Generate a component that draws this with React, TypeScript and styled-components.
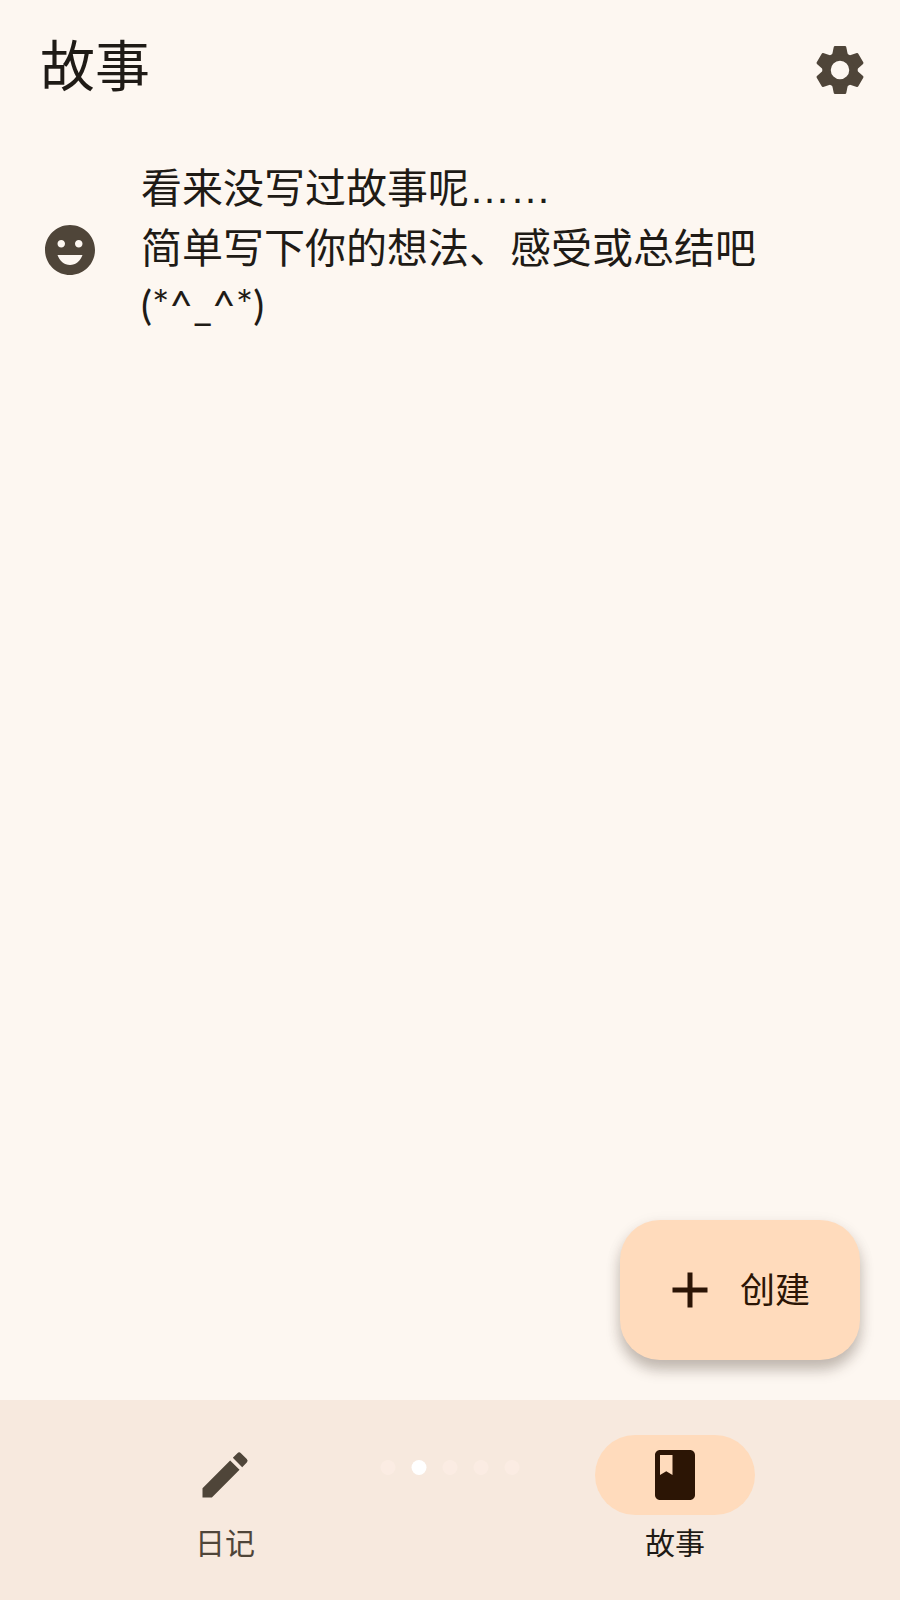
import React, { useState } from "react";
import styled, { createGlobalStyle } from "styled-components";
import { MdAdd, MdBook, MdEdit, MdEmojiEmotions } from "react-icons/md";

const color = {
  surface: "#fdf7f1",
  bar: "#f7e9de",
  accent: "#ffdbbc",
  text: "#1f1b16",
  muted: "#4f4539",
  onAccent: "#2c1505",
};

const GlobalStyle = createGlobalStyle`
  *, *::before, *::after { box-sizing: border-box; }
  body {
    margin: 0;
    background: ${color.surface};
    color: ${color.text};
    font-family: "Noto Sans CJK SC", sans-serif;
  }
  button {
    border: 0;
    padding: 0;
    background: none;
    font-family: inherit;
    cursor: pointer;
  }
  svg { display: block; }
`;

const Screen = styled.div`
  display: flex;
  flex-direction: column;
  min-height: 100vh;
`;

const TopBar = styled.header`
  display: flex;
  align-items: center;
  justify-content: space-between;
  height: 140px;
  padding: 0 30px 0 40px;
`;

const Title = styled.h1`
  margin: 0;
  padding-bottom: 16px;
  font-size: 55px;
  font-weight: 400;
  line-height: 70px;
`;

const IconButton = styled.button`
  color: ${color.muted};
`;

const Content = styled.main`
  flex: 1;
  display: flex;
  flex-direction: column;
  padding: 15px 40px 40px;
`;

const EmptyNotice = styled.section`
  display: flex;
  align-items: center;
  gap: 41px;
  svg { flex: none; color: ${color.muted}; }
`;

const NoticeText = styled.p`
  margin: 0;
  padding-bottom: 10px;
  font-size: 41px;
  line-height: 60px;
`;

const Line = styled.span`
  display: block;
  height: 60px;
`;

const Dots = styled.span`
  font-family: "Liberation Sans", sans-serif;
`;

const Kaomoji = styled(Line)`
  font-family: Lato, sans-serif;
`;

const CreateButton = styled.button`
  display: flex;
  align-items: center;
  gap: 20px;
  height: 140px;
  margin-top: auto;
  align-self: flex-end;
  padding: 0 50px 0 40px;
  border-radius: 40px;
  background: ${color.accent};
  color: ${color.onAccent};
  font-size: 35px;
  font-weight: 400;
  line-height: 50px;
  box-shadow: 0 10px 14px rgba(50, 35, 25, 0.26), 0 4px 16px rgba(60, 40, 30, 0.08);
`;

const CreateLabel = styled.span`
  padding-bottom: 4px;
`;

const NavBar = styled.nav`
  position: relative;
  display: grid;
  grid-template-columns: 1fr 1fr;
  height: 200px;
  padding-top: 35px;
  background: ${color.bar};
`;

const NavItem = styled.button<{ $active: boolean }>`
  display: flex;
  flex-direction: column;
  align-items: center;
  gap: 6px;
  color: ${(p) => (p.$active ? color.text : color.muted)};
  font-size: 30px;
  font-weight: 400;
  line-height: 40px;
`;

const Pill = styled.span<{ $active: boolean }>`
  display: grid;
  place-items: center;
  width: 160px;
  height: 80px;
  border-radius: 40px;
  background: ${(p) => (p.$active ? color.accent : "transparent")};
  color: ${(p) => (p.$active ? color.onAccent : color.muted)};
`;

const PageDots = styled.div`
  position: absolute;
  top: 60px;
  left: 50%;
  display: flex;
  gap: 16px;
  transform: translateX(-50%);
  pointer-events: none;
`;

const PageDot = styled.span<{ $current: boolean }>`
  width: 15px;
  height: 15px;
  border-radius: 50%;
  background: ${(p) => (p.$current ? "#ffffff" : "#fbece3")};
`;

function GearIcon() {
  return (
    <svg width="60" height="60" viewBox="-12 -12 24 24" fill="currentColor" aria-hidden="true">
      <circle r="5.4" fill="none" stroke="currentColor" strokeWidth="3.4" />
      {[0, 60, 120, 180, 240, 300].map((angle) => (
        <path
          key={angle}
          transform={`rotate(${angle})`}
          d="M-3.2-5.8L-2.5-9.2Q-2.4-9.6-2-9.6H2Q2.4-9.6 2.5-9.2L3.2-5.8Z"
        />
      ))}
    </svg>
  );
}

const tabs = [
  { id: "diary", label: "日记", Icon: MdEdit },
  { id: "story", label: "故事", Icon: MdBook },
];

export default function App() {
  const [active, setActive] = useState("story");

  return (
    <Screen>
      <GlobalStyle />
      <TopBar>
        <Title>故事</Title>
        <IconButton aria-label="设置">
          <GearIcon />
        </IconButton>
      </TopBar>
      <Content>
        <EmptyNotice>
          <MdEmojiEmotions size={60} />
          <NoticeText>
            <Line>看来没写过故事呢<Dots>……</Dots></Line>
            <Line>简单写下你的想法、感受或总结吧</Line>
            <Kaomoji>(*^_^*)</Kaomoji>
          </NoticeText>
        </EmptyNotice>
        <CreateButton>
          <MdAdd size={60} />
          <CreateLabel>创建</CreateLabel>
        </CreateButton>
      </Content>
      <NavBar>
        {tabs.map(({ id, label, Icon }) => (
          <NavItem key={id} $active={active === id} onClick={() => setActive(id)}>
            <Pill $active={active === id}>
              <Icon size={60} />
            </Pill>
            {label}
          </NavItem>
        ))}
        <PageDots>
          {[0, 1, 2, 3, 4].map((n) => (
            <PageDot key={n} $current={n === 1} />
          ))}
        </PageDots>
      </NavBar>
    </Screen>
  );
}
